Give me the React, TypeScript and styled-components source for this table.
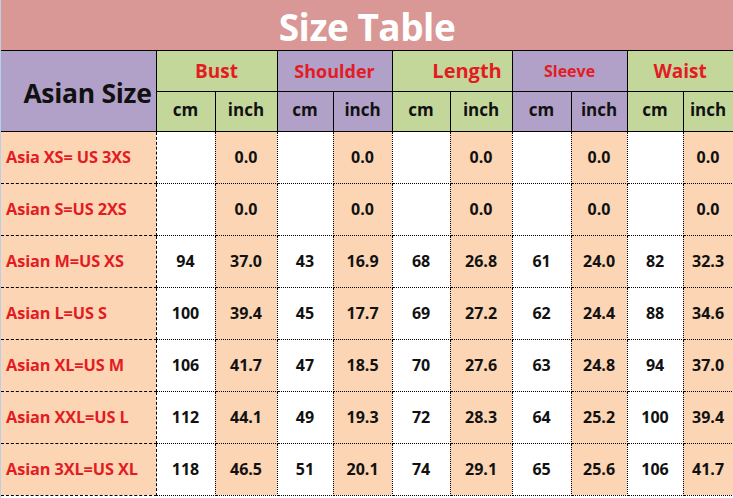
import * as React from 'react';
import styled, { createGlobalStyle } from 'styled-components';

const GlobalStyle = createGlobalStyle`
  body {
    margin: 0;
    background: #fff;
    font-family: 'Open Sans', 'Liberation Sans', sans-serif;
  }
`;

const RED = '#e31b23';
const PURPLE = '#b1a0c7';
const GREEN = '#c4d79b';
const PEACH = '#fcd5b4';

type Tone = 'purple' | 'green';
const toneColor = (t: Tone) => (t === 'purple' ? PURPLE : GREEN);

const Sheet = styled.div`
  width: 733px;
  height: 498px;
  overflow: hidden;
  box-sizing: border-box;
  border-left: 1px solid #b8d0ea;
`;

const TitleBar = styled.div`
  height: 51px;
  background: #d99795;
  border-bottom: 1px solid #000;
  display: flex;
  align-items: center;
  justify-content: center;
  color: #fff;
  font-size: 37px;
  font-weight: 700;
  letter-spacing: -0.5px;
  padding-top: 2px;
  box-sizing: border-box;
`;

const Grid = styled.table`
  border-collapse: collapse;
  table-layout: fixed;
  width: 732px;
  font-weight: 700;
`;

const HeadRow = styled.tr`
  height: 40px;
`;

const BodyRow = styled.tr`
  height: 52px;
`;

const CornerCell = styled.th`
  background: ${PURPLE};
  border: 1px solid #000;
  border-left: none;
  border-top: none;
  color: #111;
  font-size: 26.5px;
  font-weight: 700;
  text-align: right;
  padding: 4px 4px 0 0;
  letter-spacing: -0.3px;
`;

const GroupCell = styled.th<{ $tone: Tone; $size: number; $shift?: number }>`
  background: ${(p) => toneColor(p.$tone)};
  border: 1px solid #000;
  border-top: none;
  color: ${RED};
  font-size: ${(p) => p.$size}px;
  font-weight: 700;
  padding: 0 0 0 ${(p) => p.$shift || 0}px;
  text-align: center;
`;

const UnitCell = styled.th<{ $tone: Tone }>`
  background: ${(p) => toneColor(p.$tone)};
  border: 1px solid #000;
  color: #111;
  font-size: 17px;
  font-weight: 700;
  padding: 0 0 3px;
  text-align: center;
`;

const LabelCell = styled.td`
  background: ${PEACH};
  border: 1px dashed #000;
  border-left: none;
  color: ${RED};
  font-size: 16.3px;
  padding: 0 0 0 5px;
  white-space: nowrap;
  letter-spacing: -0.1px;
`;

const ValueCell = styled.td<{ $inch?: boolean }>`
  background: ${(p) => (p.$inch ? PEACH : '#fff')};
  border: 1px dotted #000;
  color: #111;
  font-size: 16px;
  text-align: center;
  padding: 0;
`;

const groups: { name: string; tone: Tone; size: number; shift?: number }[] = [
  { name: 'Bust', tone: 'green', size: 19 },
  { name: 'Shoulder', tone: 'purple', size: 18 },
  { name: 'Length', tone: 'green', size: 20, shift: 30 },
  { name: 'Sleeve', tone: 'purple', size: 16 },
  { name: 'Waist', tone: 'green', size: 19 },
];

const widths = [155, 59, 62, 56, 59, 58, 62, 59, 56, 56, 50];

const rows: string[][] = [
  ['Asia XS= US 3XS', '', '0.0', '', '0.0', '', '0.0', '', '0.0', '', '0.0'],
  ['Asian S=US 2XS', '', '0.0', '', '0.0', '', '0.0', '', '0.0', '', '0.0'],
  ['Asian M=US XS', '94', '37.0', '43', '16.9', '68', '26.8', '61', '24.0', '82', '32.3'],
  ['Asian L=US S', '100', '39.4', '45', '17.7', '69', '27.2', '62', '24.4', '88', '34.6'],
  ['Asian XL=US M', '106', '41.7', '47', '18.5', '70', '27.6', '63', '24.8', '94', '37.0'],
  ['Asian XXL=US L', '112', '44.1', '49', '19.3', '72', '28.3', '64', '25.2', '100', '39.4'],
  ['Asian 3XL=US XL', '118', '46.5', '51', '20.1', '74', '29.1', '65', '25.6', '106', '41.7'],
];

export default function App() {
  return (
    <Sheet>
      <GlobalStyle />
      <TitleBar>Size Table</TitleBar>
      <Grid>
        <colgroup>
          {widths.map((w, i) => (
            <col key={i} style={{ width: w }} />
          ))}
        </colgroup>
        <thead>
          <HeadRow>
            <CornerCell rowSpan={2}>Asian Size</CornerCell>
            {groups.map((g) => (
              <GroupCell key={g.name} colSpan={2} $tone={g.tone} $size={g.size} $shift={g.shift}>
                {g.name}
              </GroupCell>
            ))}
          </HeadRow>
          <HeadRow>
            {groups.map((g) => (
              <React.Fragment key={g.name}>
                <UnitCell $tone={g.tone}>cm</UnitCell>
                <UnitCell $tone={g.tone}>inch</UnitCell>
              </React.Fragment>
            ))}
          </HeadRow>
        </thead>
        <tbody>
          {rows.map((r) => (
            <BodyRow key={r[0]}>
              <LabelCell>{r[0]}</LabelCell>
              {r.slice(1).map((v, i) => (
                <ValueCell key={i} $inch={i % 2 === 1}>
                  {v}
                </ValueCell>
              ))}
            </BodyRow>
          ))}
        </tbody>
      </Grid>
    </Sheet>
  );
}
